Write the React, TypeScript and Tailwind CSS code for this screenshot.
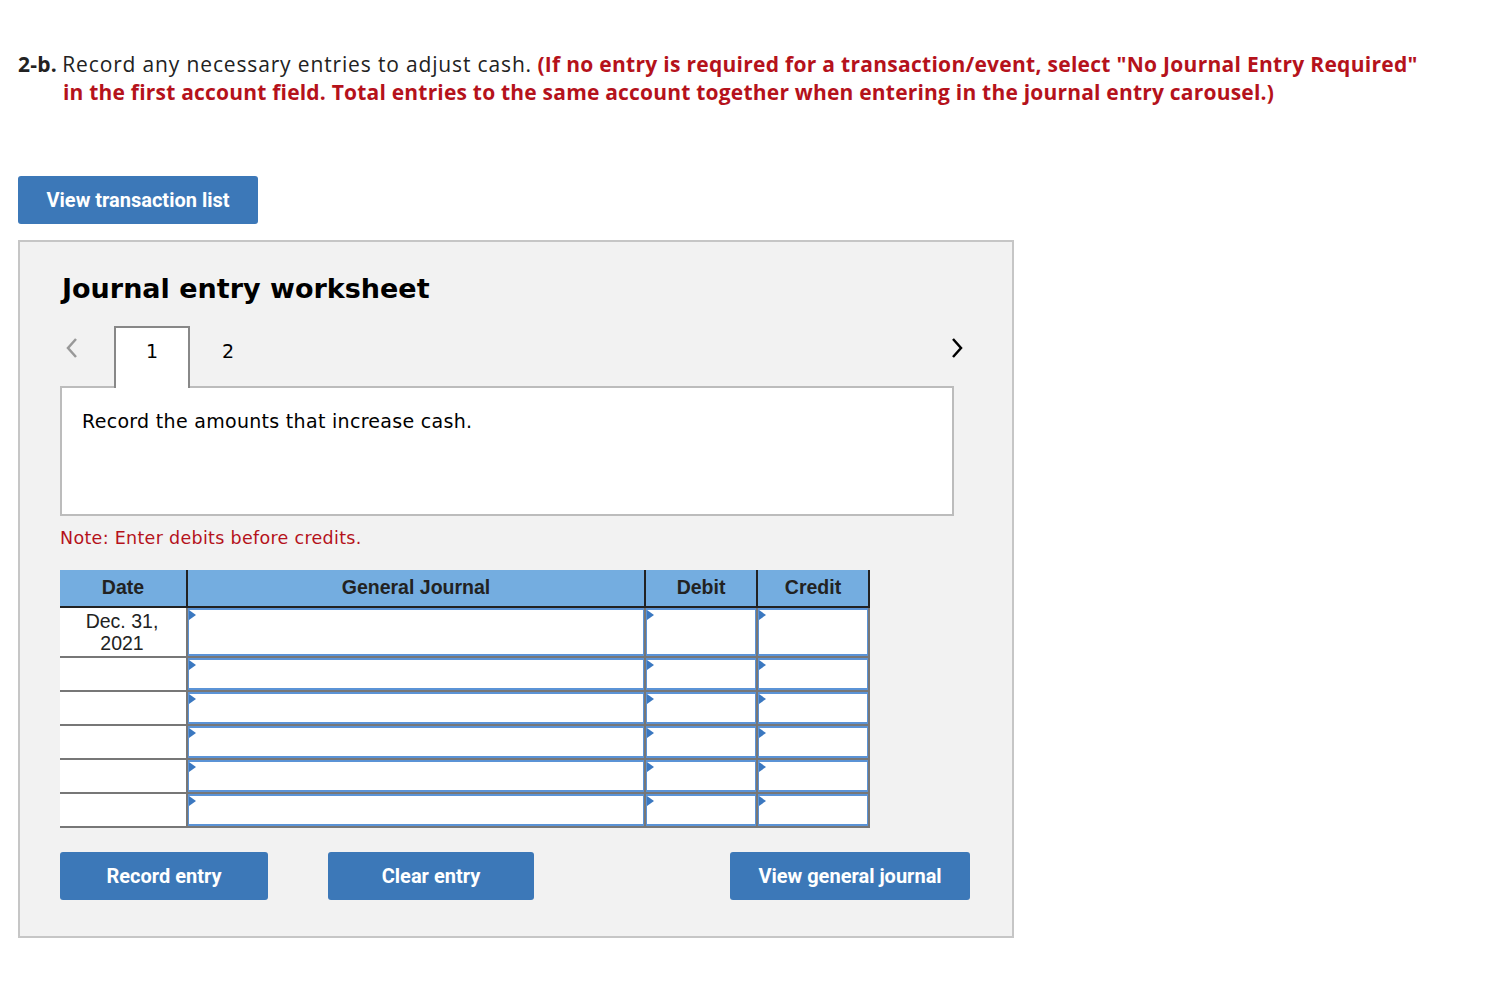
import React from "react";

const Tri = () => (
  <svg width="7" height="10" viewBox="0 0 7 10" className="absolute left-0 top-0">
    <polygon points="0,0 7,5 0,10" fill="#3b78c0" />
  </svg>
);

const InputCell = ({ h }: { h: string }) => (
  <td className="border-2 border-[#777] p-0 align-top">
    <div className={`relative ${h} border border-[#5b93d6] border-t-2 border-b-2 bg-white`}>
      <Tri />
    </div>
  </td>
);

const verdana = { fontFamily: '"DejaVu Sans", Verdana, sans-serif' };

export default function App() {
  const rows = [0, 1, 2, 3, 4, 5];
  return (
    <div className="min-h-[988px] w-[1504px] bg-white pt-[50px]">
      <div
        className="pl-[18px] pr-4 text-[21px] leading-[28px] text-[#222]"
        style={{ fontFamily: '"Open Sans", sans-serif' }}
      >
        <div className="whitespace-nowrap">
          <span className="font-bold tracking-[0.2px]">2-b.</span>{" "}
          <span className="tracking-[0.85px]">Record any necessary entries to adjust cash.</span>{" "}
          <span className="font-bold tracking-[0.28px] text-[#b5121b]">
            (If no entry is required for a transaction/event, select "No Journal Entry Required"
          </span>
        </div>
        <div className="whitespace-nowrap pl-[45px] font-bold tracking-[0.2px] text-[#b5121b]">
          in the first account field. Total entries to the same account together when entering in the journal entry carousel.)
        </div>
      </div>

      <div className="ml-[18px] mt-[70px]">
        <button
          className="flex h-[48px] w-[240px] items-center justify-center rounded-[3px] bg-[#3c78b8] text-[20px] font-bold text-white"
          style={{ fontFamily: "Roboto, sans-serif" }}
        >
          View transaction list
        </button>
      </div>

      <div className="ml-[18px] mt-[16px] h-[698px] w-[996px] border-2 border-[#c6c6c6] bg-[#f2f2f2] pl-[40px] pt-[30px]">
        <div className="ml-[2px] text-[27px] font-bold leading-[34px] text-black" style={verdana}>
          Journal entry worksheet
        </div>

        <div className="relative mt-[20px] w-[905px]">
          <div className="flex h-[62px] items-start">
            <div className="flex h-[44px] w-[54px] items-center pl-[4px]">
              <svg width="16" height="24" viewBox="0 0 16 24">
                <polyline points="12,3 4,12 12,21" fill="none" stroke="#999" strokeWidth="2.5" />
              </svg>
            </div>
            <div
              className="relative z-10 flex h-[62px] w-[76px] items-start justify-center border-2 border-b-0 border-[#888] bg-white pt-[11px] text-[19px] leading-[24px] text-black"
              style={verdana}
            >
              1
            </div>
            <div className="flex w-[76px] justify-center pt-[13px] text-[19px] leading-[24px] text-black" style={verdana}>
              2
            </div>
            <div className="flex-1" />
            <div className="flex h-[44px] items-center">
              <svg width="16" height="24" viewBox="0 0 16 24">
                <polyline points="4,3 12,12 4,21" fill="none" stroke="#000" strokeWidth="2.5" />
              </svg>
            </div>
          </div>
          <div
            className="-mt-[2px] h-[130px] w-[894px] border-2 border-[#bcbcbc] bg-white pl-[20px] pt-[21px] text-[19px] leading-[24px] tracking-[0.3px] text-black"
            style={verdana}
          >
            Record the amounts that increase cash.
          </div>
        </div>

        <div className="mt-[11px] text-[17.5px] leading-[22px] tracking-[0.3px] text-[#b5121b]" style={verdana}>
          Note: Enter debits before credits.
        </div>

        <table
          className="mt-[21px] border-collapse text-[19.5px] text-[#222]"
          style={{ fontFamily: '"Liberation Sans", Arial, sans-serif' }}
        >
          <thead>
            <tr className="h-[37px] bg-[#74ade0]">
              <th className="w-[127px] border-b-2 border-r-2 border-[#222] p-0 text-center font-bold">Date</th>
              <th className="w-[458px] border-b-2 border-r-2 border-[#222] p-0 text-center font-bold">General Journal</th>
              <th className="w-[112px] border-b-2 border-r-2 border-[#222] p-0 text-center font-bold">Debit</th>
              <th className="w-[112px] border-b-2 border-r-2 border-[#222] p-0 text-center font-bold">Credit</th>
            </tr>
          </thead>
          <tbody>
            {rows.map((i) => (
              <tr key={i} className="bg-white">
                <td className="border-b-2 border-r-2 border-[#777] p-0 text-center align-middle text-[19.5px] leading-[22px]">
                  {i === 0 ? (
                    <div className="h-[48px] pt-[2px] pr-[2px]">
                      Dec. 31,
                      <br />
                      2021
                    </div>
                  ) : (
                    <div className="h-[32px]" />
                  )}
                </td>
                <InputCell h={i === 0 ? "h-[48px]" : "h-[32px]"} />
                <InputCell h={i === 0 ? "h-[48px]" : "h-[32px]"} />
                <InputCell h={i === 0 ? "h-[48px]" : "h-[32px]"} />
              </tr>
            ))}
          </tbody>
        </table>

        <div className="mt-[24px] flex w-[910px] items-center" style={{ fontFamily: "Roboto, sans-serif" }}>
          <button className="flex h-[48px] w-[208px] items-center justify-center rounded-[3px] bg-[#3c78b8] text-[20px] font-bold text-white">
            Record entry
          </button>
          <button className="ml-[60px] flex h-[48px] w-[206px] items-center justify-center rounded-[3px] bg-[#3c78b8] text-[20px] font-bold text-white">
            Clear entry
          </button>
          <div className="flex-1" />
          <button className="flex h-[48px] w-[240px] items-center justify-center rounded-[3px] bg-[#3c78b8] text-[20px] font-bold text-white">
            View general journal
          </button>
        </div>
      </div>
    </div>
  );
}
